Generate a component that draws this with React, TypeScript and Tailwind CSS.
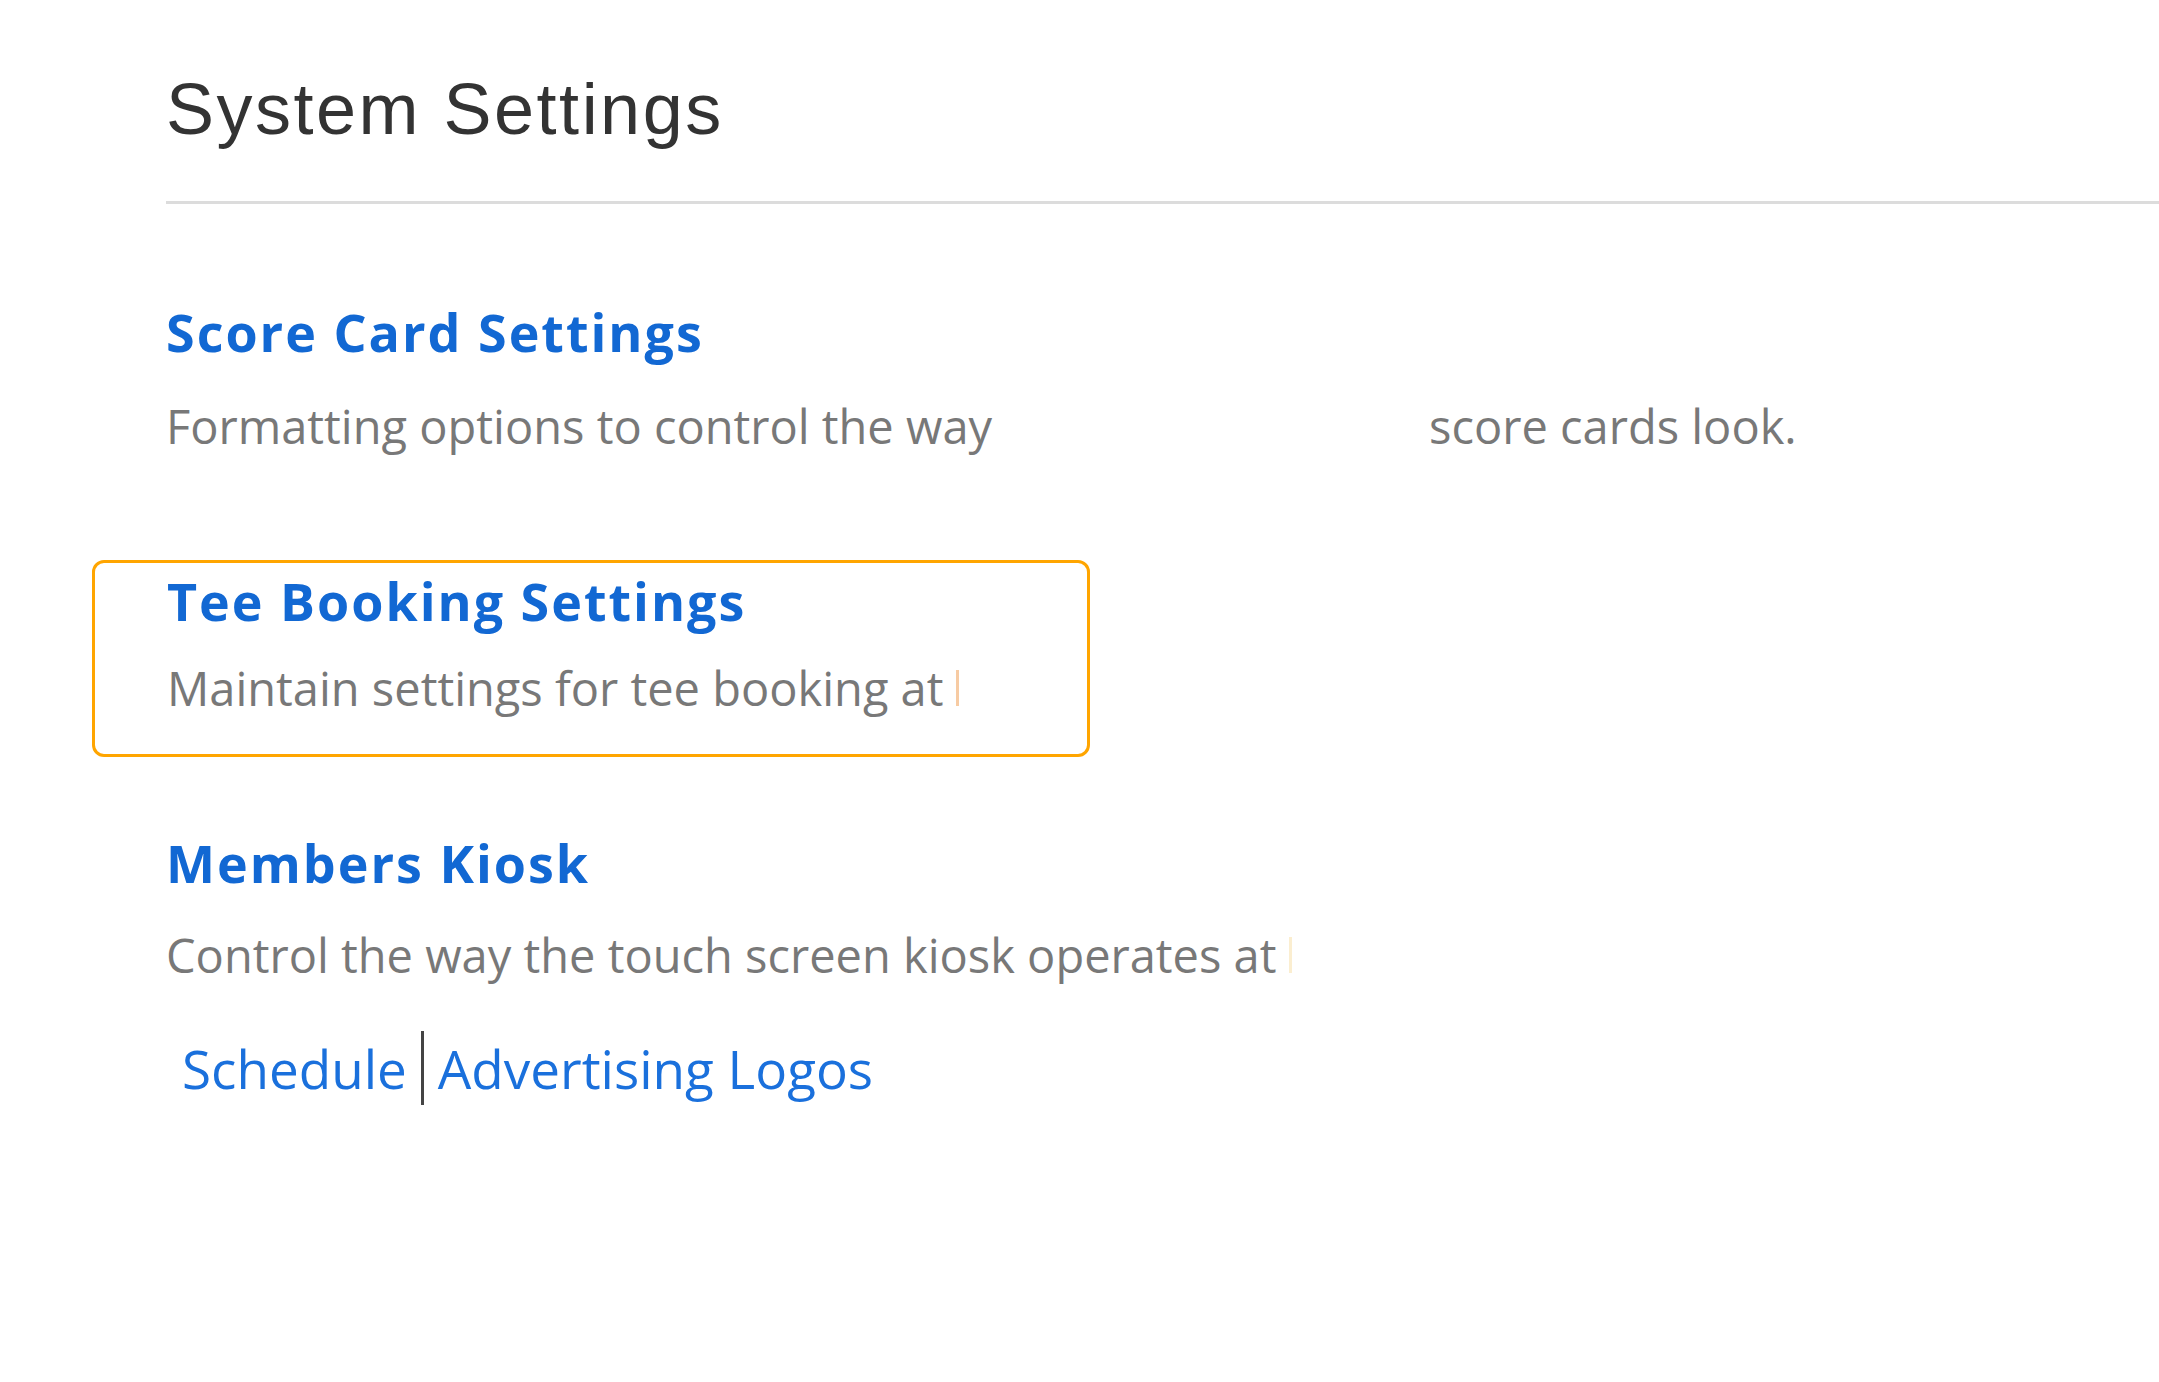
const heading = "font-['Open_Sans',sans-serif] font-bold text-[52px] leading-none tracking-[2px] text-[#1268d3]";
const desc = "font-['Open_Sans',sans-serif] text-[47px] leading-none text-[#787878]";

export default function App() {
  return (
    <div className="min-h-screen w-full bg-white pl-[166px] pt-[73px]">
      <h1 className="font-['Liberation_Sans',Arial,sans-serif] text-[72px] leading-none tracking-[2.5px] text-[#333]">
        System Settings
      </h1>
      <div className="mt-[56px] h-[3px] bg-[#dcdcdc]" />

      <section className="mt-[102px]">
        <div className={heading}>Score Card Settings</div>
        <p className={desc + " mt-[45px] whitespace-nowrap"}>
          Formatting options to control the way
          <span className="inline-block w-[437px]" />
          score cards look.
        </p>
      </section>

      <section className="-ml-[74px] mt-[110px] h-[197px] w-[998px] rounded-[12px] border-[3px] border-[#ffa500] pl-[72px] pt-[12px]">
        <div className={heading}>Tee Booking Settings</div>
        <p className={desc + " mt-[38px] whitespace-nowrap"}>
          Maintain settings for tee booking at{" "}
          <span className="inline-block h-[36px] w-[3px] bg-[#f7cba3] align-baseline" />
        </p>
      </section>

      <section className="mt-[80px]">
        <div className={heading}>Members Kiosk</div>
        <p className={desc + " mt-[43px] whitespace-nowrap"}>
          Control the way the touch screen kiosk operates at{" "}
          <span className="inline-block h-[36px] w-[3px] bg-[#fbeed0] align-baseline" />
        </p>
        <div className="mt-[52px] ml-[16px] flex items-center gap-[14px] font-['Open_Sans',sans-serif] text-[53px] leading-none text-[#1a70dc]">
          <a href="#">Schedule</a>
          <span className="h-[74px] w-[3px] bg-[#444]" />
          <a href="#">Advertising Logos</a>
        </div>
      </section>
    </div>
  );
}
